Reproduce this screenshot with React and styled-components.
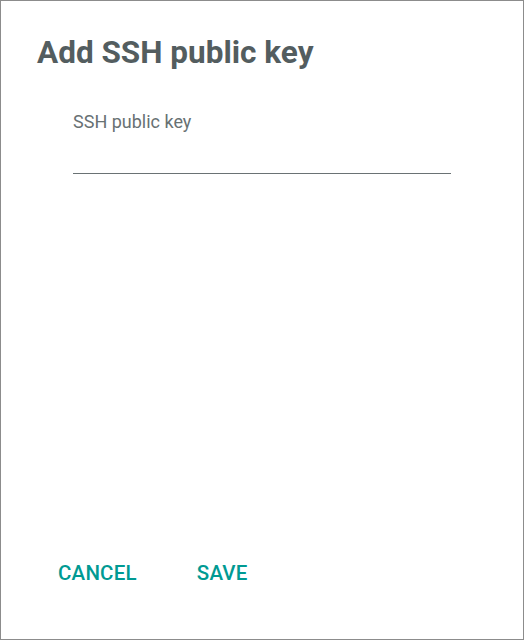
import React from "react";
import styled, { createGlobalStyle } from "styled-components";

const GlobalStyle = createGlobalStyle`
  html, body {
    margin: 0;
    padding: 0;
    background: #fff;
  }
  body {
    font-family: Roboto, "Liberation Sans", sans-serif;
  }
`;

const Dialog = styled.div`
  box-sizing: border-box;
  width: 524px;
  height: 640px;
  border: 1px solid #8c8c8c;
  background: #fff;
  display: flex;
  flex-direction: column;
`;

const Title = styled.h1`
  margin: 0;
  padding: 34px 0 0 36px;
  font-size: 31.5px;
  line-height: 36px;
  font-weight: 700;
  color: #535d5f;
`;

const Body = styled.div`
  flex: 1;
  padding: 40px 72px 0 72px;
`;

const Field = styled.label`
  display: flex;
  flex-direction: column;
`;

const Label = styled.span`
  font-size: 18px;
  line-height: 22px;
  color: #687173;
`;

const Input = styled.input`
  border: none;
  border-bottom: 1px solid #6a7274;
  outline: none;
  padding: 0;
  height: 32px;
  margin-top: 8px;
  font-family: inherit;
  font-size: 18px;
  background: transparent;
`;

const Actions = styled.div`
  display: flex;
  gap: 18px;
  padding: 0 0 48px 36px;
`;

const TextButton = styled.button`
  border: none;
  background: none;
  padding: 6px 21px;
  font-family: inherit;
  font-size: 20.5px;
  font-weight: 500;
  letter-spacing: 0.2px;
  color: #009a93;
  cursor: pointer;
`;

export default function App() {
  return (
    <>
      <GlobalStyle />
      <Dialog>
        <Title>Add SSH public key</Title>
        <Body>
          <Field>
            <Label>SSH public key</Label>
            <Input type="text" />
          </Field>
        </Body>
        <Actions>
          <TextButton>CANCEL</TextButton>
          <TextButton>SAVE</TextButton>
        </Actions>
      </Dialog>
    </>
  );
}
